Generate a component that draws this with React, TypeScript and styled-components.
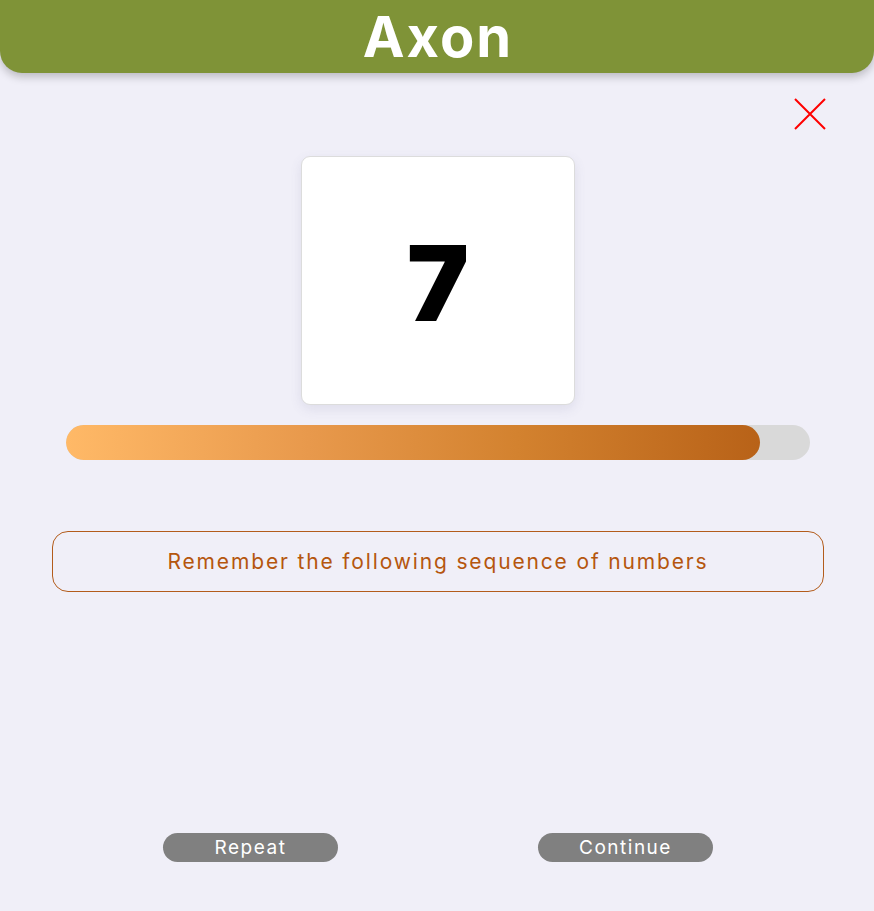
import React from 'react'
import styled, { createGlobalStyle } from 'styled-components'

const GlobalStyle = createGlobalStyle`
    html, body {
        margin: 0;
        padding: 0;
        background: #f0eff8;
    }
    body {
        font-family: 'Inter', 'Open Sans', sans-serif;
    }
`

const Page = styled.div`
    width: 874px;
    min-height: 911px;
    background: #f0eff8;
    display: flex;
    flex-direction: column;
    align-items: center;
`

const Header = styled.header`
    align-self: stretch;
    height: 73px;
    background: #7f9337;
    border-radius: 0 0 22px 22px;
    box-shadow: 0 4px 8px rgba(0, 0, 0, 0.22);
    display: flex;
    justify-content: center;
    align-items: center;
`

const Title = styled.h1`
    margin: 0 0 0 2px;
    color: #fff;
    font-family: 'Inter', sans-serif;
    font-size: 56px;
    font-weight: 700;
    letter-spacing: 2px;
    line-height: 1;
`

const CloseRow = styled.div`
    align-self: stretch;
    display: flex;
    justify-content: flex-end;
    padding: 25px 48px 0 0;
`

const CloseButton = styled.button`
    width: 32px;
    height: 32px;
    padding: 0;
    border: none;
    background: none;
    cursor: pointer;
    display: block;
`

const Card = styled.div`
    margin: 26px 0 0 2px;
    width: 274px;
    height: 249px;
    box-sizing: border-box;
    background: #fff;
    border: 1px solid #dcdcdc;
    border-radius: 9px;
    box-shadow: 0 4px 12px rgba(90, 90, 140, 0.12);
    display: flex;
    justify-content: center;
    align-items: center;
`

const Digit = styled.span`
    font-family: 'Inter', sans-serif;
    font-size: 104px;
    font-weight: 900;
    color: #000;
    line-height: 1;
    margin-top: 4px;
`

const Track = styled.div`
    margin: 20px 0 0 1px;
    width: 744px;
    height: 35px;
    border-radius: 18px;
    background: #d9d9d9;
    overflow: hidden;
`

const Fill = styled.div`
    height: 100%;
    border-radius: 18px;
    background: linear-gradient(90deg, #ffb967 0%, #e8994c 35%, #d3822f 65%, #b86218 100%);
`

const Message = styled.div`
    margin: 71px 0 0 2px;
    width: 772px;
    height: 61px;
    box-sizing: border-box;
    border: 1px solid #b35c1c;
    border-radius: 16px;
    display: flex;
    justify-content: center;
    align-items: center;
    color: #b5560e;
    font-size: 21px;
    font-weight: 400;
    letter-spacing: 1.85px;
`

const Actions = styled.div`
    margin: 241px 0 0 2px;
    width: 750px;
    display: flex;
    justify-content: space-around;
`

const ActionButton = styled.button`
    width: 175px;
    height: 29px;
    border: none;
    border-radius: 15px;
    background: #808080;
    color: #fff;
    font-family: 'Inter', sans-serif;
    font-size: 19px;
    font-weight: 400;
    letter-spacing: 1.5px;
    padding: 0;
    cursor: pointer;
`

const progress = 0.933

const App: React.FC = (): JSX.Element => {
    return (
        <>
            <GlobalStyle />
            <Page>
                <Header>
                    <Title>Axon</Title>
                </Header>
                <CloseRow>
                    <CloseButton aria-label="Close">
                        <svg width="32" height="32" viewBox="0 0 32 32">
                            <path d="M1 1 L31 31 M31 1 L1 31" stroke="#ff0000" strokeWidth="2" fill="none" />
                        </svg>
                    </CloseButton>
                </CloseRow>
                <Card>
                    <Digit>7</Digit>
                </Card>
                <Track>
                    <Fill style={{ width: `${progress * 100}%` }} />
                </Track>
                <Message>Remember the following sequence of numbers</Message>
                <Actions>
                    <ActionButton>Repeat</ActionButton>
                    <ActionButton>Continue</ActionButton>
                </Actions>
            </Page>
        </>
    )
}

export default App
